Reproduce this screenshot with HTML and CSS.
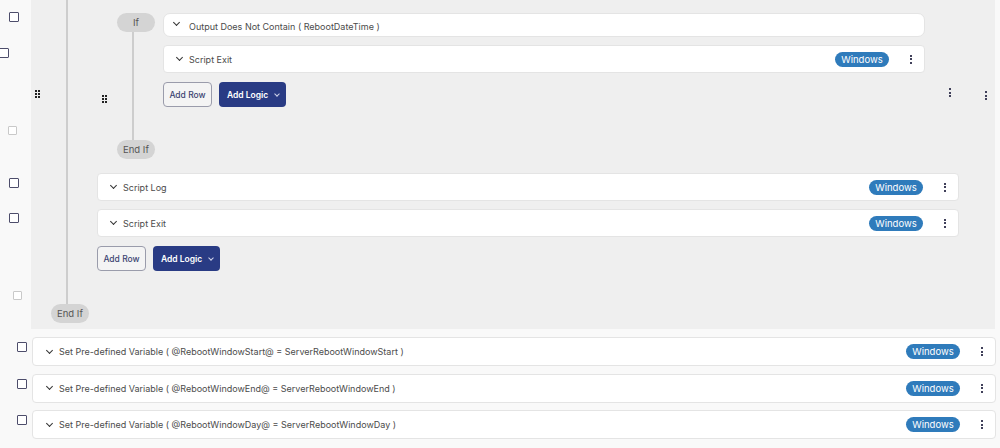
FILE: index.html
```html
<!DOCTYPE html>
<html lang="en">
<head>
    <meta charset="UTF-8">
    <title>Script Builder</title>
    <link rel="stylesheet" href="styles.css">
</head>
<body>
    <div class="top">
        <div class="gutter">
            <span class="check c1"></span>
            <span class="check c2"></span>
            <span class="check light c3"></span>
            <span class="check c4"></span>
            <span class="check c5"></span>
            <span class="check light c6"></span>
        </div>

        <div class="panel">
            <span class="grip outer-grip"><i></i><i></i><i></i><i></i><i></i><i></i></span>

            <div class="if-wrap">
                <div class="rail outer-rail">
                    <div class="rail-line"></div>
                    <div class="pill">End If</div>
                </div>

                <div class="if-body">
                    <!-- nested if block -->
                    <div class="inner-block">
                        <span class="grip inner-grip"><i></i><i></i><i></i><i></i><i></i><i></i></span>
                        <div class="rail inner-rail">
                            <div class="pill">If</div>
                            <div class="rail-line"></div>
                            <div class="pill">End If</div>
                        </div>
                        <div class="inner-content">
                            <div class="card cond">
                                <span class="chev"></span>
                                <span class="label">Output Does Not Contain ( RebootDateTime )</span>
                            </div>
                            <div class="card">
                                <span class="chev"></span>
                                <span class="label">Script Exit</span>
                                <span class="badge">Windows</span>
                                <span class="kebab"><i></i><i></i><i></i></span>
                            </div>
                            <div class="actions">
                                <button class="btn-row">Add Row</button>
                                <button class="btn-logic">Add Logic <span class="chev small"></span></button>
                            </div>
                        </div>
                        <span class="kebab side"><i></i><i></i><i></i></span>
                    </div>

                    <div class="card">
                        <span class="chev"></span>
                        <span class="label">Script Log</span>
                        <span class="badge">Windows</span>
                        <span class="kebab"><i></i><i></i><i></i></span>
                    </div>
                    <div class="card">
                        <span class="chev"></span>
                        <span class="label">Script Exit</span>
                        <span class="badge">Windows</span>
                        <span class="kebab"><i></i><i></i><i></i></span>
                    </div>
                    <div class="actions">
                        <button class="btn-row">Add Row</button>
                        <button class="btn-logic">Add Logic <span class="chev small"></span></button>
                    </div>
                </div>
            </div>

            <span class="kebab outer-kebab"><i></i><i></i><i></i></span>
        </div>
    </div>

    <div class="rows">
        <div class="row">
            <span class="check"></span>
            <div class="card wide">
                <span class="chev"></span>
                <span class="label">Set Pre-defined Variable ( @RebootWindowStart@ = ServerRebootWindowStart )</span>
                <span class="badge">Windows</span>
                <span class="kebab"><i></i><i></i><i></i></span>
            </div>
        </div>
        <div class="row">
            <span class="check"></span>
            <div class="card wide">
                <span class="chev"></span>
                <span class="label">Set Pre-defined Variable ( @RebootWindowEnd@ = ServerRebootWindowEnd )</span>
                <span class="badge">Windows</span>
                <span class="kebab"><i></i><i></i><i></i></span>
            </div>
        </div>
        <div class="row">
            <span class="check"></span>
            <div class="card wide">
                <span class="chev"></span>
                <span class="label">Set Pre-defined Variable ( @RebootWindowDay@ = ServerRebootWindowDay )</span>
                <span class="badge">Windows</span>
                <span class="kebab"><i></i><i></i><i></i></span>
            </div>
        </div>
    </div>
</body>
</html>
```

FILE: styles.css
```css
body {
    margin: 0;
    width: 1000px;
    height: 448px;
    overflow: hidden;
    background-color: #f9f9f9;
    font-family: Inter, "Noto Sans", sans-serif;
    font-size: 9px;
    color: #4b4b4b;
}

.top {
    display: flex;
    height: 329px;
}

/* left checkboxes */
.gutter {
    width: 31px;
    display: flex;
    flex-direction: column;
    align-items: flex-start;
}

.check {
    display: block;
    box-sizing: border-box;
    width: 10px;
    height: 10px;
    border: 1.5px solid #4d4d6b;
    border-radius: 1px;
    background-color: #fff;
    flex-shrink: 0;
}

.check.light {
    width: 9px;
    height: 9px;
    border: 1px solid #c9c9c9;
}

.c1 { margin: 12px 0 0 9px; }
.c2 { margin: 26px 0 0 -1px; }
.c3 { margin: 68px 0 0 8px; }
.c4 { margin: 43px 0 0 9px; }
.c5 { margin: 25px 0 0 9px; }
.c6 { margin: 68px 0 0 13px; }

.panel {
    width: 964px;
    display: flex;
    padding-left: 4px;
    box-sizing: border-box;
    background-color: #efefef;
}

/* drag handles */
.grip {
    display: grid;
    grid-template-columns: 2px 2px;
    gap: 1px;
    width: 5px;
    height: 8px;
    flex-shrink: 0;
}

.grip i {
    display: block;
    width: 2px;
    height: 2px;
    background-color: #222;
}

.outer-grip { margin-top: 90px; }
.inner-grip { margin: 82px 0 0 5px; }

.if-wrap {
    display: flex;
}

.rail {
    display: flex;
    flex-direction: column;
    align-items: flex-start;
    flex-shrink: 0;
}

.rail-line {
    flex: 1;
    width: 2px;
    margin-left: 15px;
    background-color: #cdcdcd;
}

.pill {
    width: 38px;
    height: 19px;
    line-height: 19px;
    text-align: center;
    border-radius: 10px;
    background-color: #d4d4d4;
    color: #555;
    font-size: 9.5px;
}

.outer-rail {
    width: 57px;
    padding: 0 0 6px 11px;
    box-sizing: border-box;
}

.if-body {
    width: 862px;
    display: flex;
    flex-direction: column;
    gap: 8px;
}

.inner-block {
    display: flex;
    height: 159px;
    padding-top: 13px;
    box-sizing: border-box;
    margin-bottom: 6px;
}

.inner-rail {
    width: 56px;
    padding-left: 10px;
    box-sizing: border-box;
}

.inner-content {
    width: 762px;
    display: flex;
    flex-direction: column;
    gap: 8px;
}

/* rows */
.card {
    display: flex;
    align-items: center;
    height: 28px;
    box-sizing: border-box;
    padding: 0 12px 0 10px;
    background-color: #fff;
    border: 1px solid #e4e4e4;
    border-radius: 4px;
}

.card.cond {
    height: 24px;
    border-radius: 7px;
    align-items: flex-start;
    padding-left: 7px;
}

.card.cond .chev {
    margin-top: 6px;
    margin-right: 10px;
}

.card.cond .label {
    line-height: 26px;
}

.chev {
    display: inline-block;
    width: 4px;
    height: 4px;
    border-right: 1.6px solid #333;
    border-bottom: 1.6px solid #333;
    transform: rotate(45deg);
    margin: -3px 7px 0 3px;
    flex-shrink: 0;
}

.chev.small {
    width: 3px;
    height: 3px;
    border-color: #d0d4ea;
    border-width: 0 1.2px 1.2px 0;
    margin: -2px 0 0 7px;
}

.label {
    flex: 1;
    white-space: nowrap;
}

.badge {
    width: 54px;
    height: 15px;
    line-height: 15px;
    text-align: center;
    border-radius: 8px;
    background-color: #2f7bbb;
    color: #fff;
    font-size: 9.5px;
}

.kebab {
    display: flex;
    flex-direction: column;
    gap: 1.5px;
    width: 2px;
    margin-left: 21px;
}

.kebab i {
    display: block;
    width: 2px;
    height: 2px;
    background-color: #40405a;
}

.kebab.side {
    margin: 75px 0 0 24px;
}

.outer-kebab {
    margin: 91px 0 0 26px;
}

.actions {
    display: flex;
    gap: 7px;
    margin-top: 1px;
}

button {
    height: 25px;
    box-sizing: border-box;
    border-radius: 4px;
    font-family: Inter, "Noto Sans", sans-serif;
    font-size: 8.5px;
    font-weight: 600;
    padding: 0;
}

.btn-row {
    width: 49px;
    border: 1px solid #9a9cab;
    background-color: #f4f4f4;
    color: #3c4472;
    font-weight: 500;
}

.btn-logic {
    width: 67px;
    border: none;
    background-color: #293b84;
    color: #fff;
    display: flex;
    align-items: center;
    padding-left: 8px;
}

.rows {
    display: flex;
    flex-direction: column;
    gap: 7.5px;
    padding-top: 8px;
}

.row {
    display: flex;
    align-items: flex-start;
}

.row .check {
    margin: 5px 5px 0 17px;
    width: 10px;
    height: 10px;
}

.card.wide {
    width: 964px;
    height: 29px;
    padding-left: 11px;
}
```
